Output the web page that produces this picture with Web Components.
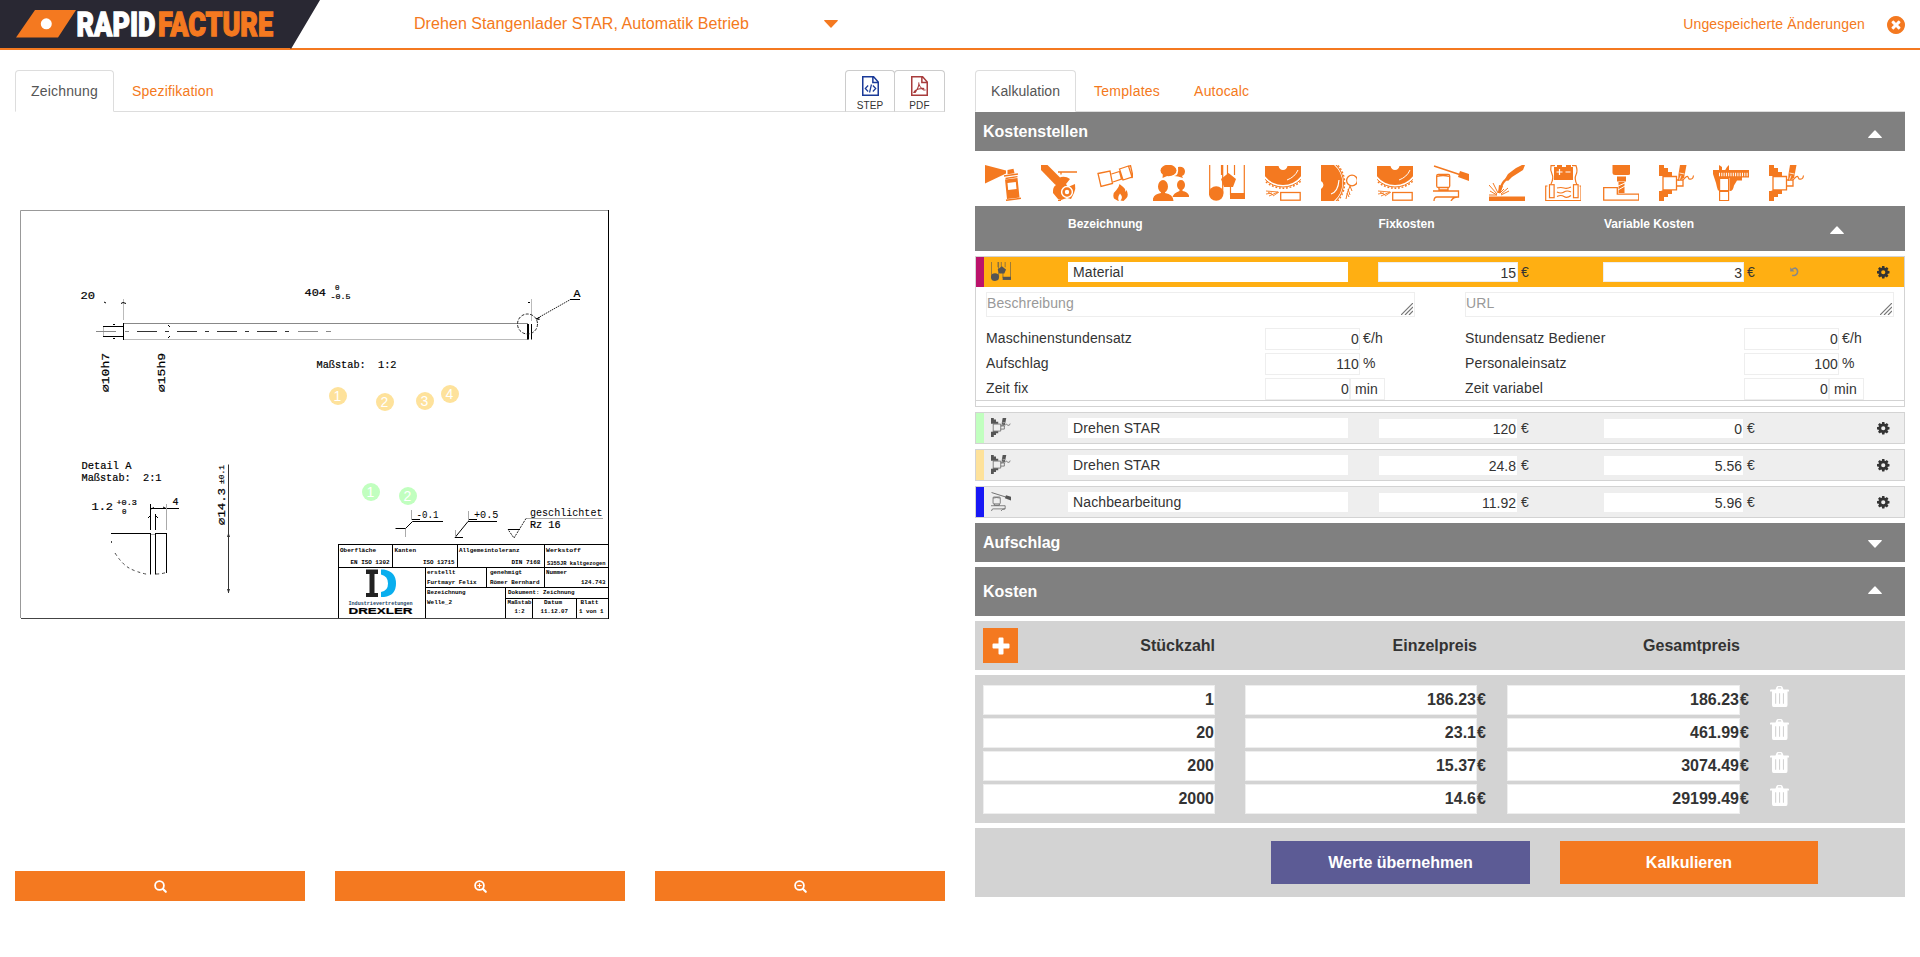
<!DOCTYPE html>
<html lang="de">
<head>
<meta charset="utf-8">
<title>Rapidfacture – Kalkulation</title>
<style>
html,body{margin:0;background:#fff}
body{font:14px/20px "Liberation Sans",Arial,sans-serif;color:#333;overflow:hidden}
</style>
</head>
<body>
<rf-app></rf-app>
<script>
const define=(name,render,after)=>customElements.define(name,class extends HTMLElement{
  constructor(){super();this.attachShadow({mode:'open'})}
  connectedCallback(){this.shadowRoot.innerHTML='<style>*{box-sizing:border-box}</style>'+render(this);if(after)after(this.shadowRoot)}
});
const S='fill="none" stroke="currentColor"';
const wheel=`<path d="M0 1H13.500Q14.500 5 18 5T22.500 1H36V11.300A23 23 0 0 1 0 11.300Z"/><circle ${S} stroke-width="1" cx="18" cy="-3" r="25"/><circle ${S} stroke-width="1.500" stroke-dasharray="1.800 1.800" cx="18" cy="-3" r="26.200"/><path fill="none" stroke="#fff" stroke-width="1" d="M22 15Q30 12 33 5"/><path ${S} stroke-width=".9" d="M1 26l12 1M4 31l9-4M1 29l6-1M8 31l6-4M3 27l5 3"/><rect fill="#fff" stroke="currentColor" stroke-width="1.300" x="15.700" y="27.500" width="19.500" height="7.700"/>`;
const lathe=`<path d="M0 0h5v3h4v4h4v4H4L2 11H0zM0 36h5v-4h4v-3h4v-4H4l-2 1H0z"/><path ${S} stroke-width="1.300" d="M4 11.500h13.500v13.300H4zM17.500 15h6.500v6h-6.500"/><path d="M21 0h6.500l-1.500 8-1 5-6 3 .5-7z"/><path stroke="#fff" stroke-width=".8" d="M20.500 8l5 1M22 10.500l-1.500 4" fill="none"/><path ${S} stroke-width="1.200" d="M24 15q4-5 5-3t1 2q4 1 4.500-3.500"/>`;
const ICONS={
spray:`<path d="M0 0L21 5.500V8.500L0 18.500z"/><path d="M22.500 5l6-1.200 1 4.500-7 1z"/><path ${S} stroke-width="1.300" d="M19 11l14-2M20.500 13.500l12-1.800"/><path fill-rule="evenodd" d="M20 14.500l12.500-1.500 2 19.500-12.500 1.500zM22.500 18l.7 7 8.300-1-.7-7z"/><path ${S} stroke-width="1.500" d="M21 35.300l15-2"/>`,
wrench:`<path d="M0 0h6.500L20 13.500 14.500 20 0 5z"/><path d="M15 15l5-3q5-1 9 2l-4 5 2 3 7-3q1 5-1 9L30 34l-4-1-6 2-3-1-5-6q-.5-6 3-8z"/><circle cx="26" cy="27" r="5.400" fill="none" stroke="#fff" stroke-width="1.500"/><circle cx="26" cy="27" r="2.200" fill="#fff"/><path ${S} stroke-width="1.300" d="M17 7h20M20 9.500V7M17 35.500h3"/>`,
heat:`<g ${S} stroke-width="1.300"><path d="M1 8.500L13 6l2.500 12.500L4 21.500zM14.500 9l8-2.500 2 7.500-8.500 3M22.500 4l9-3 3.500 11-9 3zM31.500 1.500l2-1 2.500 11-1.500 1.500"/></g><path fill-rule="evenodd" d="M22.500 19q4 3 5.500 5l.5 3 1-2q2.500 5 0 8l-3 3-3-.5q3-3-.5-7-3 4-1 8l-5-3q-2-5 2-8 3-3 3.500-6.500z"/>`,
talk:`<ellipse cx="15.500" cy="5.500" rx="8" ry="5.800"/><path d="M10 8l-.5 5 7-3z"/><path d="M21 11q5 0 4-9 6-1 7 4 0 4-3 5l1 2-5-1.500z"/><ellipse cx="10" cy="21.500" rx="5" ry="6.500"/><path d="M8 25h4v3q8 1 8.500 8H-.5Q0 29 8 28z"/><ellipse cx="28" cy="20" rx="4" ry="5"/><path d="M26.500 23h3v3q6 1 7 6H19.500q1-4 7-6z"/>`,
material:`<path ${S} stroke-width="1.200" d="M.7 0v28M13.700 0v28M12.500 0v10M18.500 0v11M25.500 0v10M21.500 20v10M35.300 0v30"/><circle cx="7.200" cy="28.500" r="7.300"/><path d="M12 14l7.500-6 7.500 6-3 8h-9z"/><path d="M21 28h15v6H21z"/>`,
wheel,
disc:`<path d="M0 0H13A23.500 23.500 0 0 1 13 36H0V24a4.500 4.500 0 0 0 0-8z"/><circle ${S} stroke-width="1.100" cx="-3" cy="18" r="25.500"/><circle ${S} stroke-width="1.300" stroke-dasharray="1.800 1.800" cx="-3" cy="18" r="26.700"/><path fill="none" stroke="#fff" stroke-width="1.200" d="M18 15q-1 12-8 14"/><circle fill="#fff" stroke="currentColor" stroke-width="1.300" cx="31" cy="15.500" r="5.400"/><path ${S} d="M29 21q-3 6-4 13M29 21l2 5M27 24l2 6M26 28l2 4"/>`,
deburr:`<path ${S} stroke-width="1.500" d="M1 1l27 9"/><path d="M27 6l9 3v7l-11-4z"/><g ${S} stroke-width="1.300"><rect x="3.700" y="9.500" width="13" height="13" rx="1.500"/><path d="M6 22.500v2.500h9v-2.500M4 11.500q6-2 12 0M0 26h25.500v6H4q-3 0-3 4M25 32q-5 0-7 4"/></g>`,
weld:`<path d="M36 0l-2 5-11 7-4 4-3-2 3-5 8-6 6-3z"/><path ${S} stroke-width="2.200" d="M18 14q-5 3-6 9l-2 5"/><path d="M10 20l4 1-3 7-2 0z"/><path d="M0 31.500h36V36H0z"/><path ${S} d="M0 20l8 9M1 26l7 4M4 18l5 10M0 30l8 0M12 29l7-6M12 30l8-4M11 28l4-4"/>`,
galvanic:`<path d="M9 2h3V0h5v2h4V0h5v2h2v13H9z"/><path fill="none" stroke="#fff" stroke-width="1.200" d="M14.500 4v6M11.500 7h6M20.500 7h5"/><g ${S} stroke-width="1.200"><path d="M10 .7H6Q5 5 7 9t-1 10M27 .7h4q2 5 0 9t1 10"/><rect x="4.500" y="19.700" width="4.600" height="13"/><rect x="28.500" y="19.700" width="4.600" height="13"/><path d="M2.500 21H.7v14.500H36V21h-1.500M12 23q4-1 7 0t7-1M12 27q4 2 7 0t7 0M12 31.500q4-2 7 0t7-1"/></g>`,
mill:`<path d="M9.500 0H27v9q0 1-2 1H12q-2.500 0-2.500-2zM14 11.500h9v5h-9zM15.500 17h6v11h-6z"/><path stroke="#fff" fill="none" d="M15 21l7-3M15 25l7-4"/><path ${S} stroke-width="1.300" d="M.7 22.700h13.600v6.500h21.500v6H.7z"/>`,
lathe,
caliper:`<path d="M0 5h36v7.500h-7v3h-5l-3 5q-1 6-4.500 5.500V13H6v12.500H5Q4 23 3 18L0 9zM6 0l3 2v5H6zM16 0v7h-5l3-5z"/><path ${S} stroke-width="1.200" d="M6.600 13.500h9v12h-9zM6.600 26.500h9v9h-9z"/><path fill="none" stroke="#fff" stroke-width="3.500" stroke-dasharray="1 1.300" d="M6 9.500h29"/>`
};
const FA={
cog:['0 -128 1536 1536','<path fill-rule="evenodd" d="M1024 640a256 256 0 1 0-512 0a256 256 0 1 0 512 0zM1536 531v222q0 12-8 23t-20 13l-185 28q-19 54-39 91 35 50 107 138 10 12 10 25t-9 23q-27 37-99 108t-94 71q-12 0-26-9l-138-108q-44 23-91 38-16 136-29 186-7 28-36 28h-222q-14 0-24.500-8.500t-11.500-21.500l-28-184q-49-16-90-37l-141 107q-10 9-25 9-14 0-25-11-126-114-165-168-7-10-7-23 0-12 8-23 15-21 51-66.500t54-70.500q-27-50-41-99l-183-27q-13-2-21-12.500t-8-23.500v-222q0-12 8-23t19-13l186-28q14-46 39-92-40-57-107-138-10-12-10-24 0-10 9-23 26-36 98.500-107.500t94.500-71.500q13 0 26 10l138 107q44-23 91-38 16-136 29-186 7-28 36-28h222q14 0 24.500 8.500t11.500 21.500l28 184q49 16 90 37l142-107q9-9 24-9 13 0 25 10 129 119 165 170 7 8 7 22 0 12-8 23-15 21-51 66.500t-54 70.500q26 50 41 98l183 28q13 2 21 12.500t8 23.500z"/>'],
close:['128 128 1536 1536','<path d="M1277 1122q0-26-19-45l-181-181 181-181q19-19 19-45 0-27-19-46l-90-90q-19-19-46-19-26 0-45 19l-181 181-181-181q-19-19-45-19-27 0-46 19l-90 90q-19 19-19 46 0 26 19 45l181 181-181 181q-19 19-19 45 0 27 19 46l90 90q19 19 46 19 26 0 45-19l181-181 181 181q19 19 45 19 27 0 46-19l90-90q19-19 19-46zm387-226q0 209-103 385.500t-279.500 279.500-385.500 103-385.500-103-279.500-279.500-103-385.500 103-385.500 279.500-279.500 385.500-103 385.500 103 279.500 279.500 103 385.500z"/>'],
up:['0 0 14 8','<path d="M.6 8Q-.4 8 .4 7L6.500.5Q7 0 7.500.5L13.600 7Q14.400 8 13.400 8z"/>'],
down:['0 0 14 8','<path d="M.6 0Q-.4 0 .4 1L6.500 7.500Q7 8 7.500 7.500L13.600 1Q14.400 0 13.400 0z"/>'],
undo:['0 0 10 10',`<path ${S} stroke-width="1.600" d="M1.800 3.200Q3 1 5.200 1A3.900 3.900 0 1 1 2.200 8.200"/><path d="M.2.200V4.500H4.500z"/>`],
plus:['0 0 18 18','<path d="M7.500.5h3q1 0 1 1v5h5q1 0 1 1v3q0 1-1 1h-5v5q0 1-1 1h-3q-1 0-1-1v-5h-5q-1 0-1-1v-3q0-1 1-1h5v-5q0-1 1-1z"/>'],
trash:['0 0 19 21','<path d="M5.500 3.500L6.500 1Q7 0 8 0h3q1 0 1.500 1l1 2.500H18q1 0 1 1V5.500h-1.500V19q0 2-1.500 2H3.500Q2 21 2 19V5.500H0v-1q0-1 1-1z"/><path fill="#d3d3d3" d="M7.700 2.600L8.200 1.300h2.700l.5 1.300zM5.100 7.300h1.100V17.800H5.100zM9 7.300h1.100V17.800H9zM12.900 7.300h1.100V17.800h-1.100z"/>'],
search:['0 0 13 13',`<circle cx="5.500" cy="5.500" r="4.400" ${S} stroke-width="1.800"/><path ${S} stroke-width="2.100" stroke-linecap="round" d="M9 9l2.800 2.800"/>`],
step:['0 0 18 20',`<path ${S} stroke-width="1.600" d="M.8.8h11.500L17.200 6v13.200H.8zM11.500.8V6.500h5.700"/><path ${S} stroke-width="1.300" d="M6.500 9.500L3.500 12.500l3 3M11.500 9.500l3 3-3 3M10 8.500l-2 8"/>`],
pdf:['0 0 18 20',`<path ${S} stroke-width="1.600" d="M.8.8h11.500L17.200 6v13.200H.8zM11.500.8V6.500h5.700"/><path ${S} stroke-width="1.100" d="M8 6.500q1 5 5.500 7.500h2M8.300 6.500q.5 4-3.800 10H3q1-2.500 5-3.500t6-.5"/>`]
};
FA.zoomin=[FA.search[0],FA.search[1]+`<path ${S} stroke-width="1.200" d="M3.300 5.500h4.400M5.500 3.300v4.400"/>`];
FA.zoomout=[FA.search[0],FA.search[1]+`<path ${S} stroke-width="1.200" d="M3.300 5.500h4.400"/>`];

define('rf-icon',e=>{
  const n=e.getAttribute('name'),[vb,b]=FA[n]||['0 0 36 36',ICONS[n]];
  const w=e.getAttribute('w'),h=e.getAttribute('h')||w;
  return `<style>:host{display:inline-block;width:${w}px;height:${h}px;flex:none}svg{display:block;overflow:${FA[n]?'visible':'hidden'}}</style><svg width="${w}" height="${h}" viewBox="${vb}" preserveAspectRatio="none" fill="currentColor">${b}</svg>`});

define('rf-header',()=>`<style>
:host{display:flex;height:50px;border-bottom:2px solid #f47920;color:#f47920;background:#fff}
.logo{display:block;flex:none;width:320px;height:50px;margin-bottom:-2px}
.sel{display:flex;width:424px;margin-left:94px;justify-content:space-between;font-size:16px;line-height:48px;white-space:nowrap;letter-spacing:.06px}
.sel rf-icon{margin-top:20px}
.st{margin-left:auto;display:flex;line-height:48px;letter-spacing:.14px;margin-right:15px}
.st rf-icon{margin:16px 0 0 22px}
text{font-family:Roboto,sans-serif;font-weight:900;font-size:34px}
</style>
<svg class="logo" viewBox="0 0 320 50"><path fill="#292833" d="M0 0H320L291 49L290 48H0z"/><path fill="#f47920" d="M16 37.500L35 10H76L58 37.500z"/><circle cx="46.300" cy="23.800" r="5.500" fill="#fff"/>
<text data-x="76.500" data-w="79" fill="#fff" stroke="#fff" stroke-width="1.300">RAPID</text><text data-x="158" data-w="115" fill="#f47920" stroke="#f47920" stroke-width="1.300">FACTURE</text></svg>
<div class="sel"><span>Drehen Stangenlader STAR, Automatik Betrieb</span><rf-icon name="down" w="14" h="8"></rf-icon></div>
<div class="st"><span>Ungespeicherte Änderungen</span><rf-icon name="close" w="18"></rf-icon></div>`,
// condense each half of the word mark to its own width
r=>r.querySelectorAll('text').forEach(t=>t.setAttribute('transform',`translate(${t.dataset.x} 36) scale(${t.dataset.w/t.getComputedTextLength()} 1)`)));

define('rf-tabs',e=>{const t=e.getAttribute('items').split(',');
return `<style>:host{display:flex;height:42px;border-bottom:1px solid #ddd}
span{height:42px;padding:10px 15px 0;border:1px solid transparent;margin-right:2px;line-height:20px;color:#f47920;white-space:nowrap;letter-spacing:.18px}
span.k{letter-spacing:.05px}span.k+span{letter-spacing:.25px}
span.on{color:#555;border-color:#ddd #ddd #fff;border-radius:4px 4px 0 0;background:#fff}
div{margin-left:auto;display:flex}</style>${t.map((x,i)=>`<span class="${i?'':'on'} ${x=='Kalkulation'?'k':''}">${x}</span>`).join('')}<div><slot></slot></div>`});

define('rf-filetab',e=>`<style>:host{display:flex;flex-direction:column;align-items:center;height:42px;width:50px;border:1px solid #ccc;border-bottom-color:#ddd;border-radius:4px 4px 0 0;padding-top:5px;font-size:10px;line-height:12px;letter-spacing:.1px}
:host(:last-child){width:51px;margin-left:-1px}rf-icon{color:${e.getAttribute('tint')};margin-bottom:4px}</style><rf-icon name="${e.getAttribute('icon')}" w="17" h="20"></rf-icon><slot></slot>`);

define('rf-bar',e=>`<style>:host{display:flex;align-items:center;justify-content:space-between;background:#808080;color:#fff;font-weight:bold;font-size:16px;height:${e.getAttribute('h')}px;padding:0 23px 0 8px;margin-bottom:${e.getAttribute('mb')||0}px}rf-icon{margin-top:${e.getAttribute('dy')||4}px}</style><span><slot></slot></span><rf-icon name="${e.getAttribute('arrow')}" w="14" h="8"></rf-icon>`);

define('rf-palette',()=>`<style>:host{display:flex;gap:20px;height:55px;padding:14px 10px 0;color:#f47920}[name=mill]{margin-left:1.500px}[name=caliper]{margin-left:-1.500px}</style>`+
 'spray,wrench,heat,talk,material,wheel,disc,wheel,deburr,weld,galvanic,mill,lathe,caliper,lathe'.split(',').map(n=>`<rf-icon name="${n}" w="36"></rf-icon>`).join(''));

define('rf-colhead',()=>`<style>:host{display:grid;grid-template-columns:93px 310.500px 225.500px 226px 1fr;height:45px;background:#808080;color:#fff;font-weight:bold;font-size:12px;line-height:36px;margin-bottom:5px}
rf-icon{margin-top:20px}span{white-space:nowrap}</style><i></i><span>Bezeichnung</span><span>Fixkosten</span><span>Variable Kosten</span><rf-icon name="up" w="14" h="8"></rf-icon>`);

define('cost-row',e=>{const a=n=>e.getAttribute(n),on=e.hasAttribute('open');
return `<style>:host{display:block;border:1px solid #d3d3d3;margin-bottom:5px;background:#fff}
.h{display:grid;grid-template-columns:8px 84px 310px 225px 187px 87px 1fr;height:30px;background:${on?'#ffaf12':'#eee'}}
.h>i{background:${a('tint')}}.h>*{margin-top:5px}.h>i{margin:0}
.ic{color:#555;padding-left:7px}
.n{background:#fff;width:280px;height:20px;padding-left:5px;line-height:20px;letter-spacing:.12px}
.c{display:flex;gap:3px;line-height:20px}.c b{font-weight:normal;width:141px;height:${on?20:21}px;background:#fff;border:1px solid #eee;text-align:right;line-height:20px;padding-right:1px}
.c:nth-child(4) b{width:140px}
.u{color:#888}.g{color:#333}.g rf-icon,.u rf-icon{margin-top:4px}
</style><div class="h"><i></i><div class="ic"><rf-icon name="${a('icon')}" w="20" h="19"></rf-icon></div><div class="n">${a('name')}</div><div class="c"><b>${a('fix')}</b>€</div><div class="c"><b>${a('var')}</b>€</div><div class="u">${on?'<rf-icon name="undo" w="10"></rf-icon>':''}</div><div class="g"><rf-icon name="cog" w="12.500"></rf-icon></div></div><slot></slot>`});

define('cost-details',()=>{
 const f=(l,v,u)=>`<label>${l}</label><div class="f ${u=='min'?'m':''}"><b>${v}</b><span>${u}</span></div>`;
 const col=(p,r)=>`<section><div class="ta">${p}<svg width="12" height="12"><path stroke="#777" stroke-width="1.200" d="M0 12L12 0M4 12l8-8M8 12l4-4"/></svg></div><div class="g">${r.map(x=>f(...x)).join('')}</div></section>`;
 return `<style>:host{display:grid;grid-template-columns:429px 429px;gap:50px;padding:5px 0 0 10px;height:114px;border-bottom:1px solid #d3d3d3;margin-bottom:5px}
.ta{height:25px;border:1px solid #eee;color:#999;line-height:21px;letter-spacing:.1px;display:flex;justify-content:space-between}svg{align-self:flex-end;margin:0 1px 1px 0}
.g{display:grid;grid-template-columns:279px 1fr;grid-auto-rows:25px;margin-top:11px;letter-spacing:.14px}label{line-height:20px}
.f{display:flex}.f b{font-weight:normal;border:1px solid #eee;width:95px;height:22px;text-align:right;line-height:20px}.f span{margin-left:3px;line-height:20px}
.m b{width:85px}.m span{margin:0;border:1px solid #eee;height:22px;width:35px;padding-left:4px}</style>`+
 col('Beschreibung',[['Maschinenstundensatz',0,'€/h'],['Aufschlag',110,'%'],['Zeit fix',0,'min']])+
 col('URL',[['Stundensatz Bediener',0,'€/h'],['Personaleinsatz',100,'%'],['Zeit variabel',0,'min']])});

define('price-table',()=>{
 const rows=[['1','186.23','186.23'],['20','23.1','461.99'],['200','15.37','3074.49'],['2000','14.6','29199.49']];
 return `<style>:host{display:block;font-weight:bold;font-size:16px}
.h,.r{display:grid;grid-template-columns:232px 232px 233px 1fr;column-gap:30px;padding-left:8px}
.h{height:49px;background:#d3d3d3;margin-bottom:5px;line-height:49px;text-align:right}
.h div{display:flex;justify-content:space-between;align-items:center}.p{width:35px;height:35px;background:#f47920;color:#fff;display:grid;place-items:center}
.b{background:#d3d3d3;height:148px;padding-top:10px;margin-bottom:5px}.r{margin-bottom:3px}
.c{display:flex;height:30px;line-height:28px;white-space:nowrap}.c b{flex:none;width:100%;background:#fff;border:1px solid #eee;text-align:right}
.r rf-icon{color:#fff;margin-top:1px}
.c span{line-height:30px}</style>
<div class="h"><div><span class="p"><rf-icon name="plus" w="18"></rf-icon></span><span>Stückzahl</span></div><span>Einzelpreis</span><span>Gesamtpreis</span></div>
<div class="b">${rows.map(r=>`<div class="r"><div class="c"><b>${r[0]}</b></div><div class="c"><b>${r[1]}</b><span>€</span></div><div class="c"><b>${r[2]}</b><span>€</span></div><rf-icon name="trash" w="19" h="21"></rf-icon></div>`).join('')}</div>`});

define('rf-actions',()=>`<style>:host{display:flex;gap:30px;background:#d3d3d3;height:69px;padding:13px 87px 0 296px;font-weight:bold;font-size:16px;color:#fff;line-height:44px;text-align:center}
div{height:43px;background:#5c5b95;width:259px}div+div{background:#f47920;width:258px}</style><div>Werte übernehmen</div><div>Kalkulieren</div>`);

define('rf-zoombar',()=>`<style>:host{display:grid;grid-template-columns:repeat(3,1fr);gap:30px}div{height:30px;background:#f47920;color:#fff;display:grid;place-items:center}</style>`+['search','zoomin','zoomout'].map(n=>`<div><rf-icon name="${n}" w="13"></rf-icon></div>`).join(''));

define('rf-drawing',()=>{
 const t=(x,y,s,size,len,extra='')=>`<text x="${x}" y="${y}" font-size="${size}" ${len?`textLength="${len}" lengthAdjust="spacingAndGlyphs"`:''} ${extra}>${s}</text>`;
 const v=(x,y,s,size,len)=>`<text transform="translate(${x} ${y}) rotate(-90)" font-size="${size}" textLength="${len}" lengthAdjust="spacingAndGlyphs">${s}</text>`;
 const pin=(x,y,n,c)=>`<circle cx="${x}" cy="${y}" r="9" fill="${c}"/><text x="${x-.5}" y="${y+4.500}" class="pin">${n}</text>`;
 return `<style>:host{display:block}svg{display:block}text{font-family:"Liberation Mono",monospace;fill:#000;white-space:pre}.bd{stroke:#000;stroke-width:.2}.pin{font:14px "Liberation Sans",sans-serif;fill:#fff;text-anchor:middle}.s text{font-weight:bold}</style>
<svg width="590" height="410" viewBox="20 210 590 410" fill="none" stroke-width="1">
<path stroke="#999" d="M20.500 618V210.500H608"/><path stroke="#444" d="M21 618.500H608"/><path stroke="#000" d="M608.500 210V619"/>
<path stroke="#888" d="M123.500 323.500H528"/><path stroke="#bbb" d="M123.500 339.500H528M123.500 299V320M103.500 326V336M531.500 299v22"/>
<path stroke="#000" d="M103 326.500h20M103 336.500h20M123.500 323v17M531.500 324v15.500M104 302l2 1M121 303.500l2-1 3 1M113 324.500h2M113 338.500h2M168 325l2 2M168 338l2-2"/><path stroke="#000" stroke-width="2" d="M528 324v15.500"/><path stroke="#000" d="M528 302.500h2"/>
<path stroke="#888" d="M96 331.500h20M125 331.500h4"/><path stroke="#333" stroke-dasharray="20 8 4 8" d="M137 331.500H297"/><path stroke="#888" d="M298 331.500h20M326 331.500h5"/>
<circle cx="527.500" cy="324" r="10" stroke="#222" stroke-dasharray="3 1.500"/><path stroke="#222" stroke-dasharray="1.500 .8" d="M536 319L570.500 299.500"/><path stroke="#000" d="M570 299.500h10M536 319l4-1.500M537 319l2.500.5"/>
<g class="bd">${t(80.500,299,'20',10.500,14.500)}${t(304.500,295.500,'404',10.500,21.500)}${t(335,290,'0',7,4.500)}${t(330.500,298.500,'-0.5',7,20)}${t(573.500,297,'A',11,7)}
${t(316.500,368,'Maßstab:  1:2',10.500,80)}${t(81.500,468.500,'Detail A',10.500,50)}${t(81.500,480.500,'Maßstab:  2:1',10.500,80)}
${t(91.500,509.500,'1.2',10.500,21.500)}${t(116.500,504.500,'+0.3',7.500,20.500)}${t(122,514,'0',7.500,4.500)}${t(172.500,504.500,'4',10.500,6)}
${v(109,392,'⌀10h7',10.500,39)}${v(165,392,'⌀15h9',10.500,39)}${v(224.500,525,'⌀14.3',10.500,37)}${v(224,484,'±0.1',7.500,19)}</g>
<path stroke="#000" d="M150.500 504v26M155.500 514v16M150.500 533v41.500M155.500 533v41.500M166.500 533v40M111 533.500h39M155 533.500h12M151 508.500h28M148 518l2-2M158 518l-2-2M151 509l3-1.500M163 507l3 1.500"/><path stroke="#aaa" d="M166.500 504v26M151 534.500h4"/><path stroke="#333" stroke-width=".9" stroke-dasharray="3 3" d="M111.500 541v2M115 553Q122 564 129 568T148 574.500M156 574q7 0 11-2"/>
<path stroke="#333" d="M228.500 464.500V593M227.500 537l1-3 1 3M227.500 589l1 3 1-3"/>
<g>${t(416.500,518,'-0.1',11.500,22)}${t(474,518,'+0.5',11.500,24.500)}${t(530,515.500,'geschlichtet',11,72.500)}</g><g class="bd">${t(530,527.500,'Rz 16',10.500,30.500)}</g>
<path stroke="#000" d="M412 519.500h8M412.500 521.500h30.500M412.500 521.500l-7 7h-10M468 519.500h9M468 521.500h29M468 521.500L455 537.500h8"/><path stroke="#aaa" d="M411.500 510v10M405.500 529v8M468.500 511v10M455.500 530v7M526 518.500h77"/><path stroke="#222" stroke-dasharray="2 1" d="M526 518.500L514 538l-6-8.500"/><path stroke="#000" d="M508 529.500h12"/>
<path stroke="#000" d="M338 544.500H608M338.500 544V618M392.500 544v23M457.500 544v23M544.500 544v43M338 567.500H608M425.500 567v51M486.500 567v20M425 587.500H608M505.500 587v31M505 598.500H608M532.500 598v20M576.500 598v20"/>
<g class="s">${t(340,551.500,'Oberfläche',6,36)}${t(394.500,551.500,'Kanten',6,21.500)}${t(459,551.500,'Allgemeintoleranz',6,60.500)}${t(546,551.500,'Werkstoff',6,35)}
${t(350.500,563.500,'EN ISO 1302',6,39)}${t(423,563.500,'ISO 13715',6,31.500)}${t(511.500,563.500,'DIN 7168',6,29)}${t(547,565,'S355JR kaltgezogen',5.500,58.500)}
${t(427,574,'erstellt',6,28.500)}${t(490,574,'genehmigt',6,32)}${t(546,574,'Nummer',6,21)}
${t(427,584,'Furtmayr Felix',6,49.500)}${t(490,584,'Römer Bernhard',6,49.500)}${t(581,584,'124.743',6,24.500)}
${t(427,594,'Bezeichnung',6,38.500)}${t(508,594,'Dokument: Zeichnung',6,66.500)}${t(427,604,'Welle_2',6,25)}
${t(507.500,604,'Maßstab',6,24)}${t(544,604,'Datum',6,18)}${t(580.500,604,'Blatt',6,18)}
${t(514.500,612.500,'1:2',6,10)}${t(540.500,612.500,'11.12.07',6,27.500)}${t(579,612.500,'1 von 1',6,24.500)}
${t(348.500,605,'Industrievertretungen',5,64,'style="fill:#246"')}${t(348.500,614,'DREXLER',9.500,64,'class="bd" style="font-family:Liberation Sans"')}</g>
<path fill="#222" d="M366 569.500h12v4.500h-3.500v19H378v4H366v-4h3.500v-19H366z"/><path fill="#09aeee" fill-rule="evenodd" d="M381 569.500h3q12 2 12 14t-12 13.500h-3v-5q7-1 7-8.500T381 574.500z"/>
${pin(338,396,1,'#fee29b')}${pin(385,402,2,'#fee29b')}${pin(425,401,3,'#fee29b')}${pin(450,394,4,'#fee29b')}${pin(371,492,1,'#c1ffbf')}${pin(408,496,2,'#c1ffbf')}
</svg>`});

define('rf-app',()=>`<style>:host{display:block;height:957px}
main{display:grid;grid-template-columns:930px 930px;gap:30px;padding:20px 15px 0}
.l{display:flex;flex-direction:column;height:831px}.l rf-drawing{margin:98px 0 0 5px}.l rf-zoombar{margin-top:auto}</style>
<rf-header></rf-header><main>
<section class="l"><rf-tabs items="Zeichnung,Spezifikation"><rf-filetab icon="step" tint="#1a3a98">STEP</rf-filetab><rf-filetab icon="pdf" tint="#a83c3c">PDF</rf-filetab></rf-tabs><rf-drawing></rf-drawing><rf-zoombar></rf-zoombar></section>
<section><rf-tabs items="Kalkulation,Templates,Autocalc"></rf-tabs>
<rf-bar h="39" arrow="up">Kostenstellen</rf-bar><rf-palette></rf-palette><rf-colhead></rf-colhead>
<cost-row open tint="#bb126b" icon="material" name="Material" fix="15" var="3"><cost-details></cost-details></cost-row>
<cost-row tint="#c1ffbf" icon="lathe" name="Drehen STAR" fix="120" var="0"></cost-row>
<cost-row tint="#fee29b" icon="lathe" name="Drehen STAR" fix="24.8" var="5.56"></cost-row>
<cost-row tint="#1717f5" icon="deburr" name="Nachbearbeitung" fix="11.92" var="5.96"></cost-row>
<rf-bar h="39" mb="5" arrow="down" dy="2">Aufschlag</rf-bar><rf-bar h="49" mb="5" arrow="up" dy="-3">Kosten</rf-bar>
<price-table></price-table><rf-actions></rf-actions></section></main>`);
</script>
</body>
</html>
